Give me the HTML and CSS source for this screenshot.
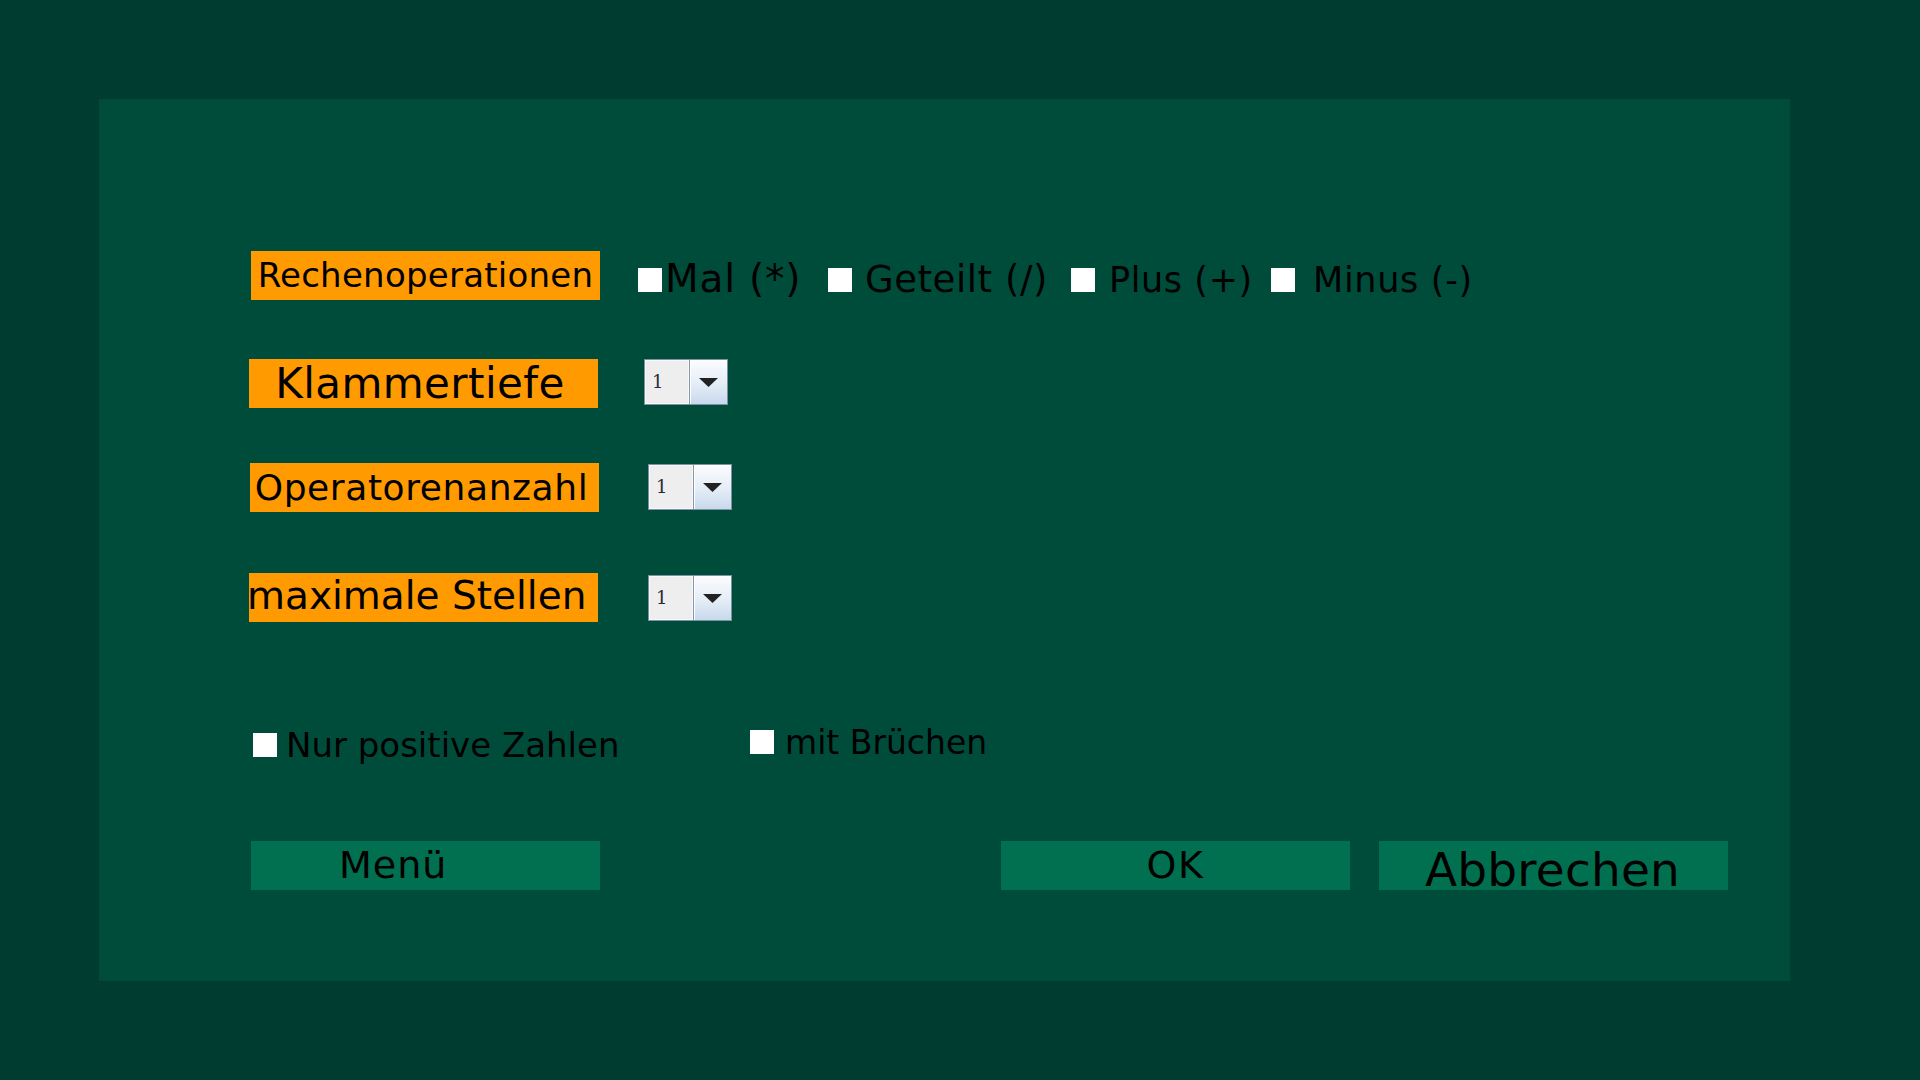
FILE: index.html
```html
<!DOCTYPE html>
<html lang="de">
<head>
<meta charset="utf-8">
<title>Einstellungen</title>
<link rel="stylesheet" href="styles.css">
</head>
<body>
<div class="panel">
  <div class="row row1">
    <div class="label lbl-ops">Rechenoperationen</div>
    <div class="ops">
      <div class="op op-mal"><span class="box"></span><span class="op-text t-mal">Mal (*)</span></div>
      <div class="op op-geteilt"><span class="box"></span><span class="op-text t-geteilt">Geteilt (/)</span></div>
      <div class="op op-plus"><span class="box"></span><span class="op-text t-plus">Plus (+)</span></div>
      <div class="op op-minus"><span class="box"></span><span class="op-text t-minus">Minus (-)</span></div>
    </div>
  </div>

  <div class="row row2">
    <div class="label lbl-klammer">Klammertiefe</div>
    <div class="combo combo-klammer">
      <div class="combo-field">1</div>
      <div class="combo-btn"><svg width="19" height="9" viewBox="0 0 19 9"><path d="M0 0 H19 L9.5 9 Z" fill="#222"/></svg></div>
    </div>
  </div>

  <div class="row row3">
    <div class="label lbl-opanz">Operatorenanzahl</div>
    <div class="combo combo-opanz">
      <div class="combo-field">1</div>
      <div class="combo-btn"><svg width="19" height="9" viewBox="0 0 19 9"><path d="M0 0 H19 L9.5 9 Z" fill="#222"/></svg></div>
    </div>
  </div>

  <div class="row row4">
    <div class="label lbl-stellen"><span class="stellen-text">maximale Stellen</span></div>
    <div class="combo combo-stellen">
      <div class="combo-field">1</div>
      <div class="combo-btn"><svg width="19" height="9" viewBox="0 0 19 9"><path d="M0 0 H19 L9.5 9 Z" fill="#222"/></svg></div>
    </div>
  </div>

  <div class="row row5">
    <div class="check check-pos"><span class="box"></span><span class="check-text t-pos">Nur positive Zahlen</span></div>
    <div class="check check-bruch"><span class="box"></span><span class="check-text t-bruch">mit Brüchen</span></div>
  </div>

  <div class="row row6">
    <div class="btn btn-menu">Menü</div>
    <div class="btn btn-ok">OK</div>
    <div class="btn btn-abbr">Abbrechen</div>
  </div>
</div>
</body>
</html>
```

FILE: styles.css
```css
html, body {
  margin: 0;
  padding: 0;
}
body {
  background: #003c2f;
  font-family: "DejaVu Sans", "Liberation Sans", sans-serif;
  color: #000;
  width: 1920px;
  height: 1080px;
  overflow: hidden;
}
body::before {
  content: "";
  display: table;
}
.panel {
  margin-left: 99px;
  margin-top: 99px;
  width: 1691px;
  height: 882px;
  background: #004c3b;
  display: flex;
  flex-direction: column;
  overflow: hidden;
}
.row {
  display: flex;
  align-items: flex-start;
  flex-shrink: 0;
}
.row1 { margin-top: 152px; height: 49px; }
.row2 { margin-top: 59px; height: 49px; }
.row3 { margin-top: 55px; height: 49px; }
.row4 { margin-top: 61px; height: 49px; }
.row5 { margin-top: 102px; height: 40px; }
.row6 { margin-top: 77px; height: 49px; }

.label {
  background: #ff9a00;
  width: 349px;
  height: 49px;
  line-height: 49px;
  text-align: center;
  white-space: nowrap;
  flex-shrink: 0;
}
.lbl-ops { margin-left: 152px; font-size: 34px; letter-spacing: 0.25px; }
.lbl-klammer { margin-left: 150px; font-size: 42px; padding-right: 7px; width: 342px; letter-spacing: 0.4px; }
.lbl-opanz { margin-left: 151px; font-size: 36px; padding-right: 6px; width: 343px; letter-spacing: 0.6px; }
.lbl-stellen {
  margin-left: 150px;
  font-size: 39px;
  line-height: 45px;
  text-align: left;
  overflow: visible;
}
.stellen-text { margin-left: -2px; }

/* operations checkboxes */
.ops {
  display: flex;
  align-items: baseline;
  margin-left: 38px;
  margin-top: 8px;
}
.op {
  display: flex;
  align-items: baseline;
  flex-shrink: 0;
  white-space: nowrap;
}
.op-mal { width: 190px; }
.op-geteilt { width: 243px; }
.op-plus { width: 200px; }
.op-minus { width: 220px; }
.box {
  display: inline-block;
  width: 24px;
  height: 24px;
  background: #fff;
  flex-shrink: 0;
}
.op-text { line-height: 40px; }
.t-mal { font-size: 39px; margin-left: 3px; letter-spacing: 0.8px; }
.t-geteilt { font-size: 37px; margin-left: 13px; letter-spacing: 0.55px; }
.t-plus { font-size: 35px; margin-left: 14px; letter-spacing: 0.6px; }
.t-minus { font-size: 35px; margin-left: 18px; letter-spacing: 0.7px; }

/* combo boxes */
.combo {
  display: flex;
  width: 84px;
  height: 46px;
  box-sizing: border-box;
  border: 1px solid #7d91a4;
  flex-shrink: 0;
  background: #eeeeee;
}
.combo-klammer { margin-left: 46px; }
.combo-opanz { margin-left: 49px; margin-top: 1px; }
.combo-stellen { margin-left: 50px; margin-top: 2px; }
.combo-field {
  width: 44px;
  box-sizing: border-box;
  border: 1px solid #f8f8f8;
  background: #eeeeee;
  font-size: 18px;
  line-height: 42px;
  padding-left: 6px;
  color: #2a2a3a;
  font-family: "DejaVu Serif", "Liberation Serif", serif;
}
.combo-btn {
  flex: 1;
  border-left: 1px solid #8497aa;
  background: linear-gradient(#fbfcfe, #e4edf7 55%, #c8d9ec);
  display: flex;
  align-items: center;
  justify-content: center;
  box-shadow: inset 1px 1px 0 #ffffff;
}
.combo-btn svg { display: block; }

/* bottom checkboxes */
.check {
  display: flex;
  align-items: baseline;
  white-space: nowrap;
  flex-shrink: 0;
}
.check-text { line-height: 34px; }
.check-pos { margin-left: 154px; margin-top: 4px; width: 497px; }
.t-pos { font-size: 34px; margin-left: 9px; }
.check-bruch { margin-top: 2px; }
.t-bruch { font-size: 33px; margin-left: 11px; line-height: 33px; }

/* buttons */
.btn {
  background: #007050;
  width: 349px;
  height: 49px;
  line-height: 49px;
  white-space: nowrap;
  flex-shrink: 0;
  font-size: 38px;
  text-align: center;
}
.btn-menu {
  margin-left: 152px;
  text-align: left;
  padding-left: 88px;
  width: 261px;
  letter-spacing: 1px;
}
.btn-ok { margin-left: 401px; letter-spacing: 1.5px; }
.btn-abbr {
  margin-left: 29px;
  font-size: 47px;
  line-height: 57px;
  padding-left: 2px;
  padding-right: 4px;
  width: 343px;
  letter-spacing: 0.2px;
}
```
